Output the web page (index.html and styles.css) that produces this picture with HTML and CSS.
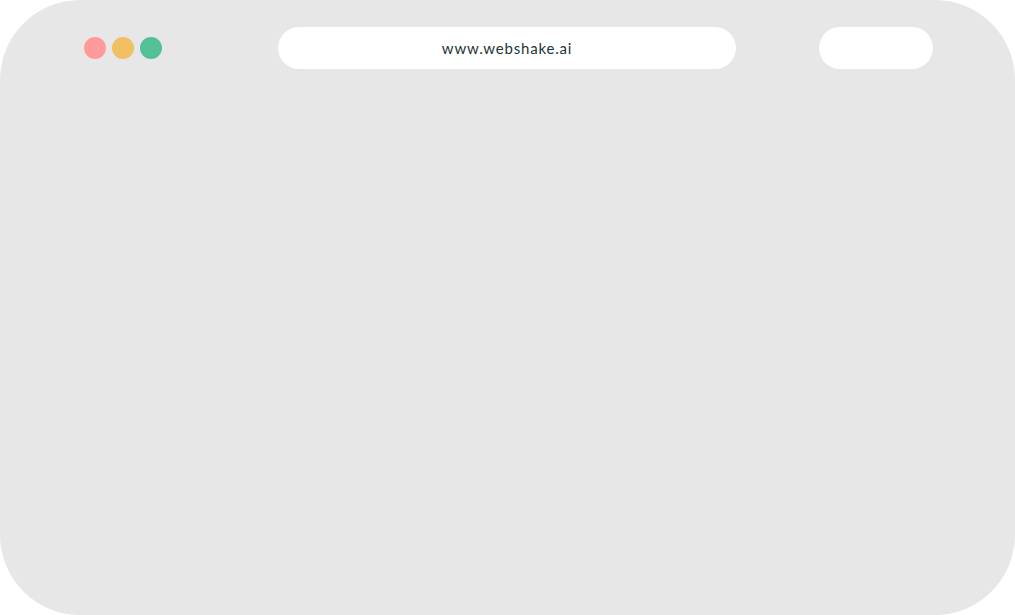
FILE: index.html
```html
<!DOCTYPE html>
<html lang="en">
<head>
<meta charset="utf-8">
<title>webshake.ai</title>
<link rel="stylesheet" href="styles.css">
</head>
<body>
<div class="window">
  <div class="toolbar">
    <div class="dots">
      <span class="dot red"></span>
      <span class="dot yellow"></span>
      <span class="dot green"></span>
    </div>
    <div class="url">www.webshake.ai</div>
    <div class="pill"></div>
  </div>
</div>
</body>
</html>
```
FILE: styles.css
```css
html, body {
  margin: 0;
  padding: 0;
  background: #ffffff;
}
.window {
  width: 1015px;
  height: 615px;
  background: #e7e7e7;
  border-radius: 80px;
  box-sizing: border-box;
  padding-top: 27px;
}
.toolbar {
  display: flex;
  align-items: center;
  height: 42px;
  padding-left: 84px;
}
.dots {
  display: flex;
  gap: 6px;
}
.dot {
  width: 22px;
  height: 22px;
  border-radius: 50%;
  display: block;
}
.red { background: #ff9a9a; }
.yellow { background: #f1c062; }
.green { background: #53c095; }
.url {
  margin-left: 116px;
  width: 458px;
  height: 42px;
  border-radius: 21px;
  background: #ffffff;
  display: flex;
  align-items: center;
  justify-content: center;
  font-family: "Lato", "Noto Sans", sans-serif;
  font-size: 15px;
  color: #1e3438;
  letter-spacing: 0.8px;
}
.pill {
  margin-left: 83px;
  width: 114px;
  height: 42px;
  border-radius: 21px;
  background: #ffffff;
}
```
